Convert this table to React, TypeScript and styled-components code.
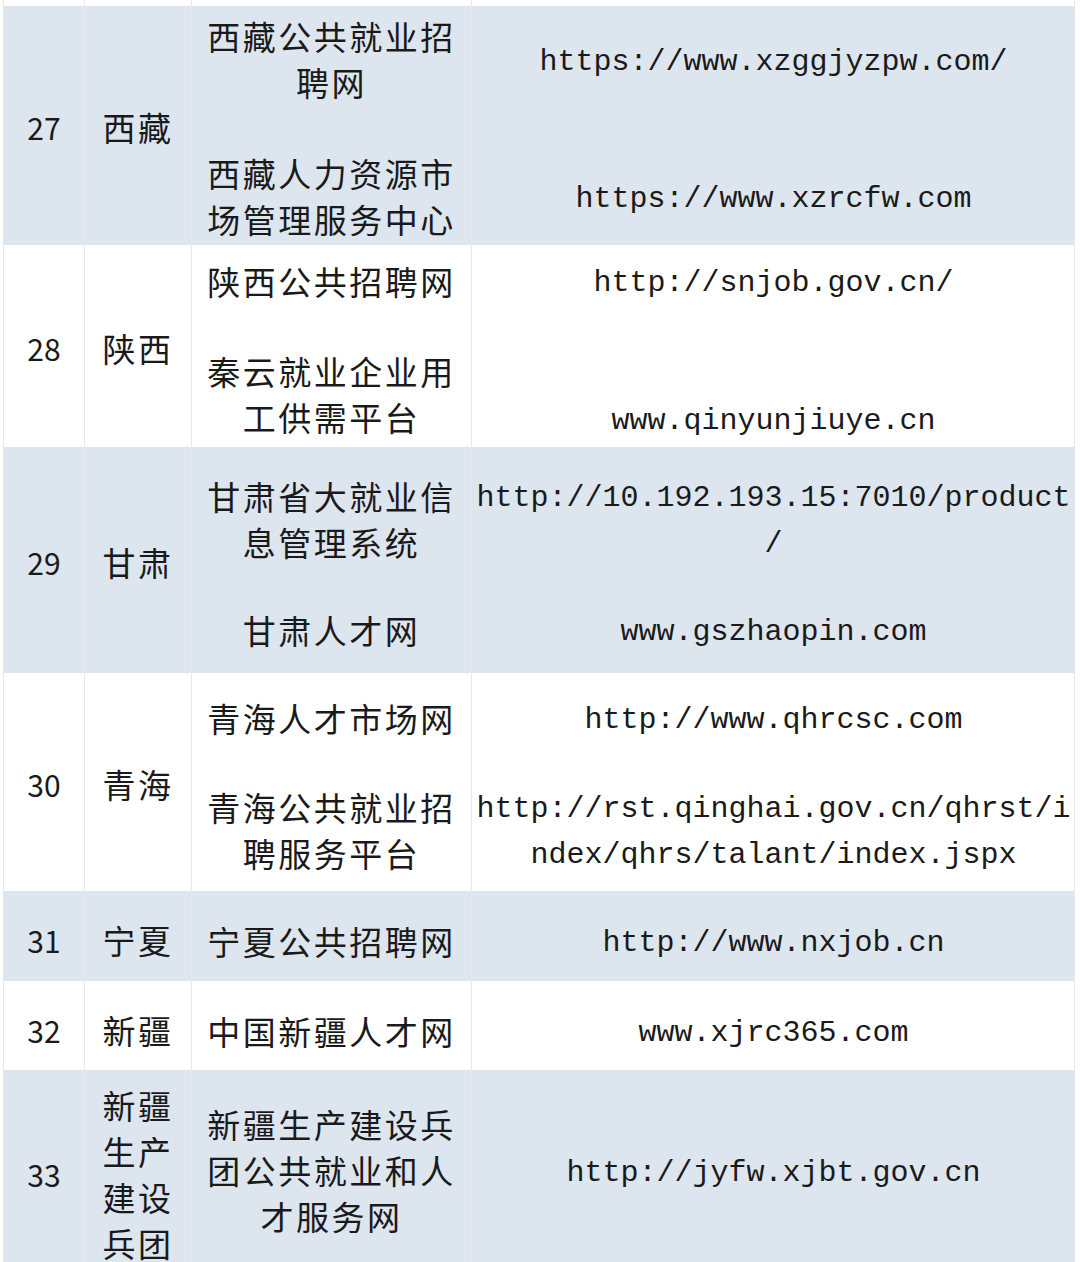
import React from "react";
import styled, { createGlobalStyle } from "styled-components";

type Entry = { name: string; url: string; urlAlign?: "center" | "end" };
type RowData = {
  num: string;
  prov: string;
  h: number;
  pt: number;
  pb: number;
  shaded: boolean;
  entries: Entry[];
};

const rows: RowData[] = [
  {
    num: "27",
    prov: "西藏",
    h: 239,
    pt: 7,
    pb: 3,
    shaded: true,
    entries: [
      { name: "西藏公共就业招聘网", url: "https://www.xzggjyzpw.com/" },
      { name: "西藏人力资源市场管理服务中心", url: "https://www.xzrcfw.com" },
    ],
  },
  {
    num: "28",
    prov: "陕西",
    h: 202,
    pt: 10,
    pb: 7,
    shaded: false,
    entries: [
      { name: "陕西公共招聘网", url: "http://snjob.gov.cn/" },
      { name: "秦云就业企业用工供需平台", url: "www.qinyunjiuye.cn", urlAlign: "end" },
    ],
  },
  {
    num: "29",
    prov: "甘肃",
    h: 226,
    pt: 23,
    pb: 18,
    shaded: true,
    entries: [
      { name: "甘肃省大就业信息管理系统", url: "http://10.192.193.15:7010/product/" },
      { name: "甘肃人才网", url: "www.gszhaopin.com" },
    ],
  },
  {
    num: "30",
    prov: "青海",
    h: 218,
    pt: 19,
    pb: 13,
    shaded: false,
    entries: [
      { name: "青海人才市场网", url: "http://www.qhrcsc.com" },
      {
        name: "青海公共就业招聘服务平台",
        url: "http://rst.qinghai.gov.cn/qhrst/index/qhrs/talant/index.jspx",
      },
    ],
  },
  {
    num: "31",
    prov: "宁夏",
    h: 90,
    pt: 24,
    pb: 20,
    shaded: true,
    entries: [{ name: "宁夏公共招聘网", url: "http://www.nxjob.cn" }],
  },
  {
    num: "32",
    prov: "新疆",
    h: 89,
    pt: 24,
    pb: 19,
    shaded: false,
    entries: [{ name: "中国新疆人才网", url: "www.xjrc365.com" }],
  },
  {
    num: "33",
    prov: "新疆生产建设兵团",
    h: 204,
    pt: 31,
    pb: 35,
    shaded: true,
    entries: [{ name: "新疆生产建设兵团公共就业和人才服务网", url: "http://jyfw.xjbt.gov.cn" }],
  },
];

const GlobalStyle = createGlobalStyle`
  html, body {
    margin: 0;
    padding: 0;
    background: #ffffff;
    overflow: hidden;
  }
`;

const LINE = "#e6e8eb";

const Page = styled.div`
  padding: 0 5px 0 3px;
  background: #ffffff;
`;

const Table = styled.div`
  width: 1072px;
  color: #1a1a1a;
  font-family: "Noto Sans CJK SC", "Noto Sans", sans-serif;
`;

const Row = styled.div<{ $h: number; $shaded: boolean }>`
  display: grid;
  grid-template-columns: 80px 107px 885px;
  height: ${(p) => p.$h}px;
  box-sizing: border-box;
  background: ${(p) => (p.$shaded ? "#dde5ef" : "#ffffff")};
  border-left: 1px solid ${LINE};
  border-right: 1px solid ${LINE};
`;

const NumCell = styled.div`
  display: flex;
  align-items: center;
  justify-content: center;
  padding-top: 3px;
  font-size: 30px;
  line-height: 46px;
`;

const ProvCell = styled.div`
  display: flex;
  align-items: center;
  justify-content: center;
  box-sizing: border-box;
  padding: 3px 6px 0;
  border-left: 1px solid ${LINE};
  font-size: 33px;
  letter-spacing: 2.5px;
  line-height: 46px;
  text-align: center;
`;

const EntryList = styled.div<{ $pt: number; $pb: number }>`
  display: flex;
  flex-direction: column;
  justify-content: space-between;
  padding: ${(p) => p.$pt}px 0 ${(p) => p.$pb}px;
  border-left: 1px solid ${LINE};
  background: linear-gradient(
    to right,
    transparent 279px,
    ${LINE} 279px,
    ${LINE} 280px,
    transparent 280px
  );
`;

const EntryRow = styled.div`
  display: grid;
  grid-template-columns: 279px 605px;
  align-items: center;
`;

const SiteName = styled.div`
  box-sizing: border-box;
  padding: 0 10px;
  font-size: 33px;
  letter-spacing: 2.5px;
  line-height: 46px;
  text-align: center;
`;

const SiteUrl = styled.div<{ $align: "center" | "end" }>`
  align-self: ${(p) => p.$align};
  box-sizing: border-box;
  padding: 5px 3px 0;
  margin-bottom: ${(p) => (p.$align === "end" ? "-4px" : "0")};
  font-family: "Liberation Mono", "DejaVu Sans Mono", monospace;
  font-size: 30px;
  line-height: 46px;
  text-align: center;
  word-break: break-all;
  line-break: anywhere;
`;

const App = () => (
  <Page>
    <GlobalStyle />
    <Table>
      <Row $h={6} $shaded={false}>
        <div />
        <ProvCell />
        <EntryList $pt={0} $pb={0} />
      </Row>
      {rows.map((r) => (
        <Row key={r.num} $h={r.h} $shaded={r.shaded}>
          <NumCell>{r.num}</NumCell>
          <ProvCell>{r.prov}</ProvCell>
          <EntryList $pt={r.pt} $pb={r.pb}>
            {r.entries.map((e) => (
              <EntryRow key={e.url}>
                <SiteName>{e.name}</SiteName>
                <SiteUrl $align={e.urlAlign ?? "center"}>{e.url}</SiteUrl>
              </EntryRow>
            ))}
          </EntryList>
        </Row>
      ))}
    </Table>
  </Page>
);

export default App;
